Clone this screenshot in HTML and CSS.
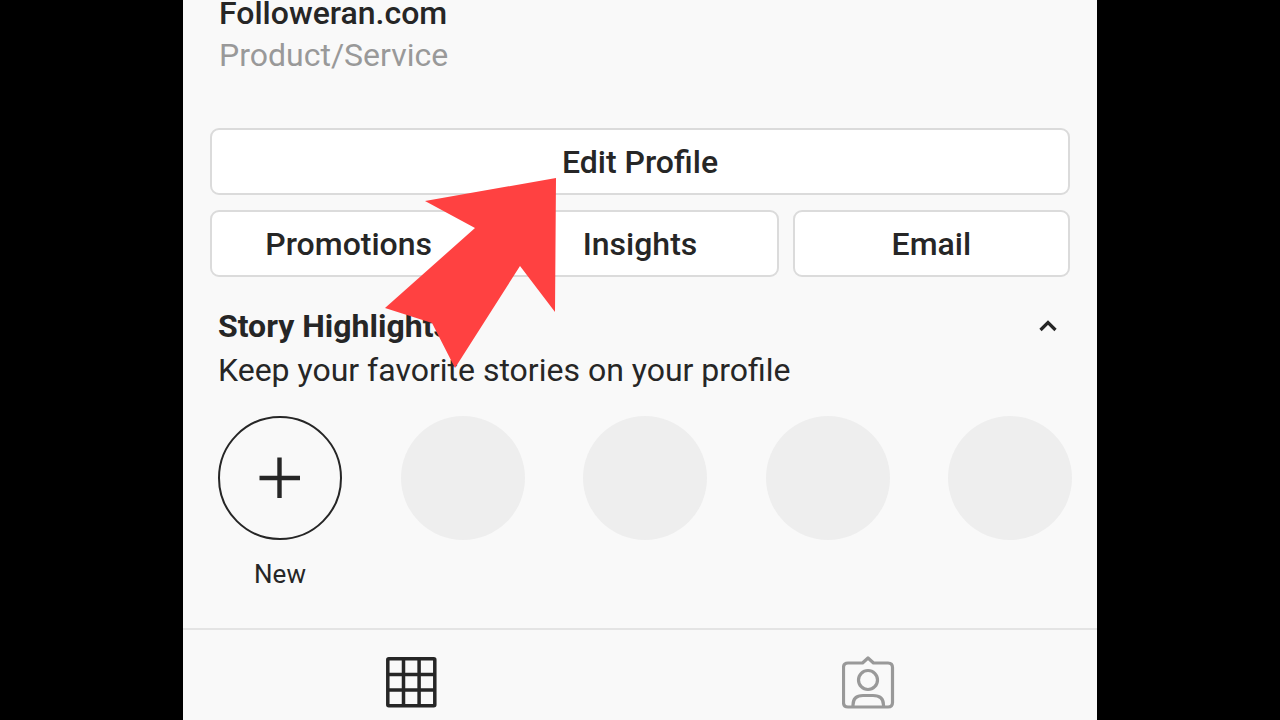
FILE: index.html
```html
<!DOCTYPE html>
<html lang="en">
<head>
<meta charset="UTF-8">
<meta name="viewport" content="width=device-width, initial-scale=1.0">
<title>Followeran.com</title>
<link rel="stylesheet" href="styles.css">
</head>
<body>
<main class="profile">
  <header class="bio">
    <h1 class="bio-name">Followeran.com</h1>
    <p class="bio-category">Product/Service</p>
  </header>

  <div class="actions">
    <button type="button" class="btn btn-wide">Edit Profile</button>
    <button type="button" class="btn">Promotions</button>
    <button type="button" class="btn">Insights</button>
    <button type="button" class="btn">Email</button>
  </div>

  <section class="highlights">
    <div class="highlights-head">
      <h2 class="highlights-title">Story Highlights</h2>
      <button type="button" class="toggle" aria-label="Collapse">
        <svg width="20" height="14" viewBox="0 0 20 14"><path d="M2.500 11 L10 3.500 L17.500 11" fill="none" stroke="#262626" stroke-width="3.200"/></svg>
      </button>
    </div>
    <p class="highlights-text">Keep your favorite stories on your profile</p>
    <div class="stories">
      <div class="story">
        <button type="button" class="circle circle-new" aria-labelledby="new-label">
          <svg width="42" height="42" viewBox="0 0 42 42"><path d="M20.500 0.500 V41 M0.500 21 H41" stroke="#262626" stroke-width="4.400"/></svg>
        </button>
        <span class="story-label" id="new-label">New</span>
      </div>
      <div class="circle"></div>
      <div class="circle"></div>
      <div class="circle"></div>
      <div class="circle"></div>
    </div>
  </section>

  <nav class="tabs">
    <button type="button" class="tab" aria-label="Posts">
      <svg width="54" height="54" viewBox="0 0 54 54" fill="none" stroke="#262626" stroke-width="3.500">
        <rect x="2.800" y="2.800" width="47" height="47" rx="1"/>
        <path d="M18.500 2.800 V49.800 M34.100 2.800 V49.800 M2.800 18.500 H49.800 M2.800 34.100 H49.800"/>
      </svg>
    </button>
    <button type="button" class="tab" aria-label="Tagged">
      <svg width="54" height="54" viewBox="0 0 54 54" fill="none" stroke="#999" stroke-width="3.200" stroke-linejoin="round">
        <path d="M6 7 H20.500 L26 2 L31.500 7 H46 Q50.500 7 50.500 11.500 V46.500 Q50.500 51 46 51 H6 Q1.500 51 1.500 46.500 V11.500 Q1.500 7 6 7 Z"/>
        <circle cx="26" cy="24" r="9.500"/>
        <path d="M11 51 V49 Q11 39.500 21 39.500 H31 Q41.500 39.500 41.500 49 V51"/>
      </svg>
    </button>
  </nav>

  <svg class="pointer" width="172" height="192" viewBox="0 0 172 192"><path d="M172 0 L41 23 L91 50 L1 130 L48 145 L71 190 L136 88 L171 134 Z" fill="#ff4141"/></svg>
</main>
</body>
</html>
```
FILE: styles.css
```css
* {
  box-sizing: border-box;
}
body {
  margin: 0;
  background: #000;
  color: #262626;
  font-family: Roboto, "Liberation Sans", sans-serif;
  font-size: 32px;
  overflow: hidden;
}
h1, h2, p {
  margin: 0;
}
button {
  padding: 0;
  border: none;
  background: none;
  color: inherit;
  font: inherit;
  cursor: pointer;
}
svg {
  display: block;
}

/* the feed is scrolled a little, so the name starts above the top edge */
.profile {
  position: relative;
  max-width: 914px;
  min-height: calc(100vh + 8px);
  margin: -8px auto 0;
  background: #f9f9f9;
}

.bio {
  padding: 0 36px;
  line-height: 42px;
}
.bio-name {
  font-size: 32px;
  font-weight: 500;
}
.bio-category {
  color: #999;
}

.actions {
  display: grid;
  grid-template-columns: repeat(3, 1fr);
  gap: 15px 14px;
  padding: 52px 27px 0;
}
.btn {
  height: 67px;
  border: 2px solid #dbdbdb;
  border-radius: 9px;
  background: #fff;
  font-weight: 500;
}
.btn-wide {
  grid-column: 1 / -1;
}

.highlights {
  padding: 27px 25px 0 35px;
  line-height: 44px;
}
.highlights-head {
  display: flex;
  align-items: center;
  justify-content: space-between;
}
.highlights-title {
  font-size: 32px;
  font-weight: 700;
}
.toggle {
  padding: 0 14px;
}
.stories {
  display: flex;
  justify-content: space-between;
  align-items: flex-start;
  margin-top: 24px;
}
.story {
  display: flex;
  flex-direction: column;
  align-items: center;
  gap: 18px;
}
.circle {
  width: 124px;
  height: 124px;
  border-radius: 50%;
  background: #eee;
}
.circle-new {
  display: flex;
  align-items: center;
  justify-content: center;
  border: 2px solid #262626;
  background: none;
}
.story-label {
  font-size: 26px;
  line-height: 32px;
}

.tabs {
  display: flex;
  margin-top: 38px;
  border-top: 2px solid #e4e4e4;
}
.tab {
  flex: 1;
  display: flex;
  justify-content: center;
  padding: 26px 0 8px;
}

/* arrow over the buttons, pointing at Edit Profile */
.pointer {
  position: absolute;
  top: 186px;
  left: 201px;
  pointer-events: none;
}
```
